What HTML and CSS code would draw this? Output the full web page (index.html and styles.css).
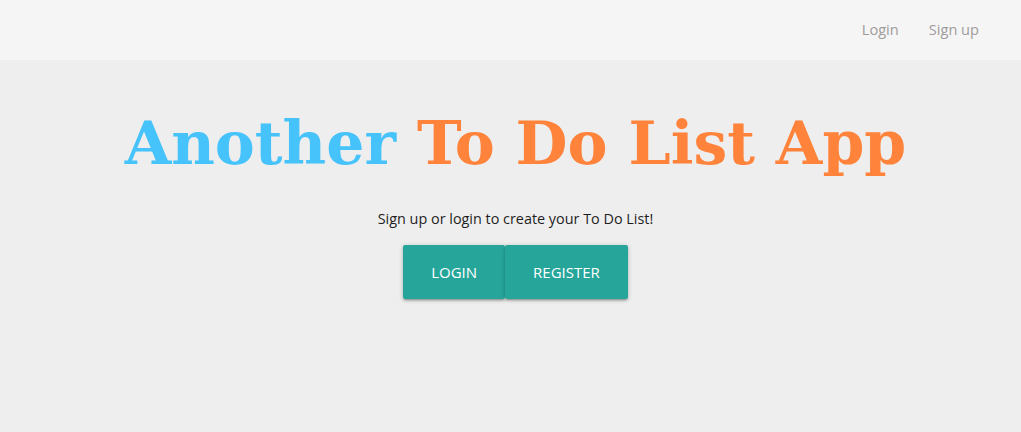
FILE: index.html
```html
<!DOCTYPE html>
<html lang="en">
<head>
<meta charset="utf-8">
<title>Another To Do List App</title>
<link rel="stylesheet" href="styles.css">
</head>
<body>
<nav class="navbar">
  <ul class="nav-links">
    <li><a href="#">Login</a></li>
    <li><a href="#">Sign up</a></li>
  </ul>
</nav>
<main class="hero">
  <h1 class="title"><span class="blue">Another</span> <span class="orange">To Do List App</span></h1>
  <p class="lead">Sign up or login to create your To Do List!</p>
  <div class="actions">
    <a class="btn" href="#">LOGIN</a>
    <a class="btn" href="#">REGISTER</a>
  </div>
</main>
</body>
</html>
```
FILE: styles.css
```css
html, body {
  margin: 0;
  padding: 0;
}
body {
  background: #eeeeee;
  font-family: "Open Sans", "Noto Sans", sans-serif;
  color: #222;
  min-height: 432px;
}
.navbar {
  height: 60px;
  background: #f5f5f5;
  display: flex;
  justify-content: flex-end;
  align-items: center;
  padding-right: 27px;
}
.nav-links {
  list-style: none;
  margin: 0;
  padding: 0;
  display: flex;
}
.nav-links a {
  display: block;
  padding: 0 15px;
  font-size: 14.6px;
  line-height: 20px;
  margin-top: -2px;
  color: #a09c9c;
  text-decoration: none;
}
.hero {
  display: flex;
  flex-direction: column;
  align-items: center;
  padding-left: 10px;
}
.title {
  margin: 41px 0 0;
  font-family: "DejaVu Serif", Georgia, serif;
  font-weight: bold;
  font-size: 60px;
  line-height: 84px;
  letter-spacing: 0;
}
.blue { color: #47c3fc; }
.orange { color: #ff833b; }
.lead {
  margin: 24px 0 0;
  font-size: 14.4px;
  color: #1e1e1e;
}
.actions {
  display: flex;
  margin-top: 17px;
}
.btn {
  display: block;
  height: 54px;
  line-height: 54px;
  padding: 0 28px;
  background: #26a69a;
  color: #fff;
  font-size: 15px;
  text-decoration: none;
  border-radius: 2px;
  box-shadow: 0 2px 2px 0 rgba(0,0,0,0.14), 0 3px 1px -2px rgba(0,0,0,0.12), 0 1px 5px 0 rgba(0,0,0,0.2);
}
```
